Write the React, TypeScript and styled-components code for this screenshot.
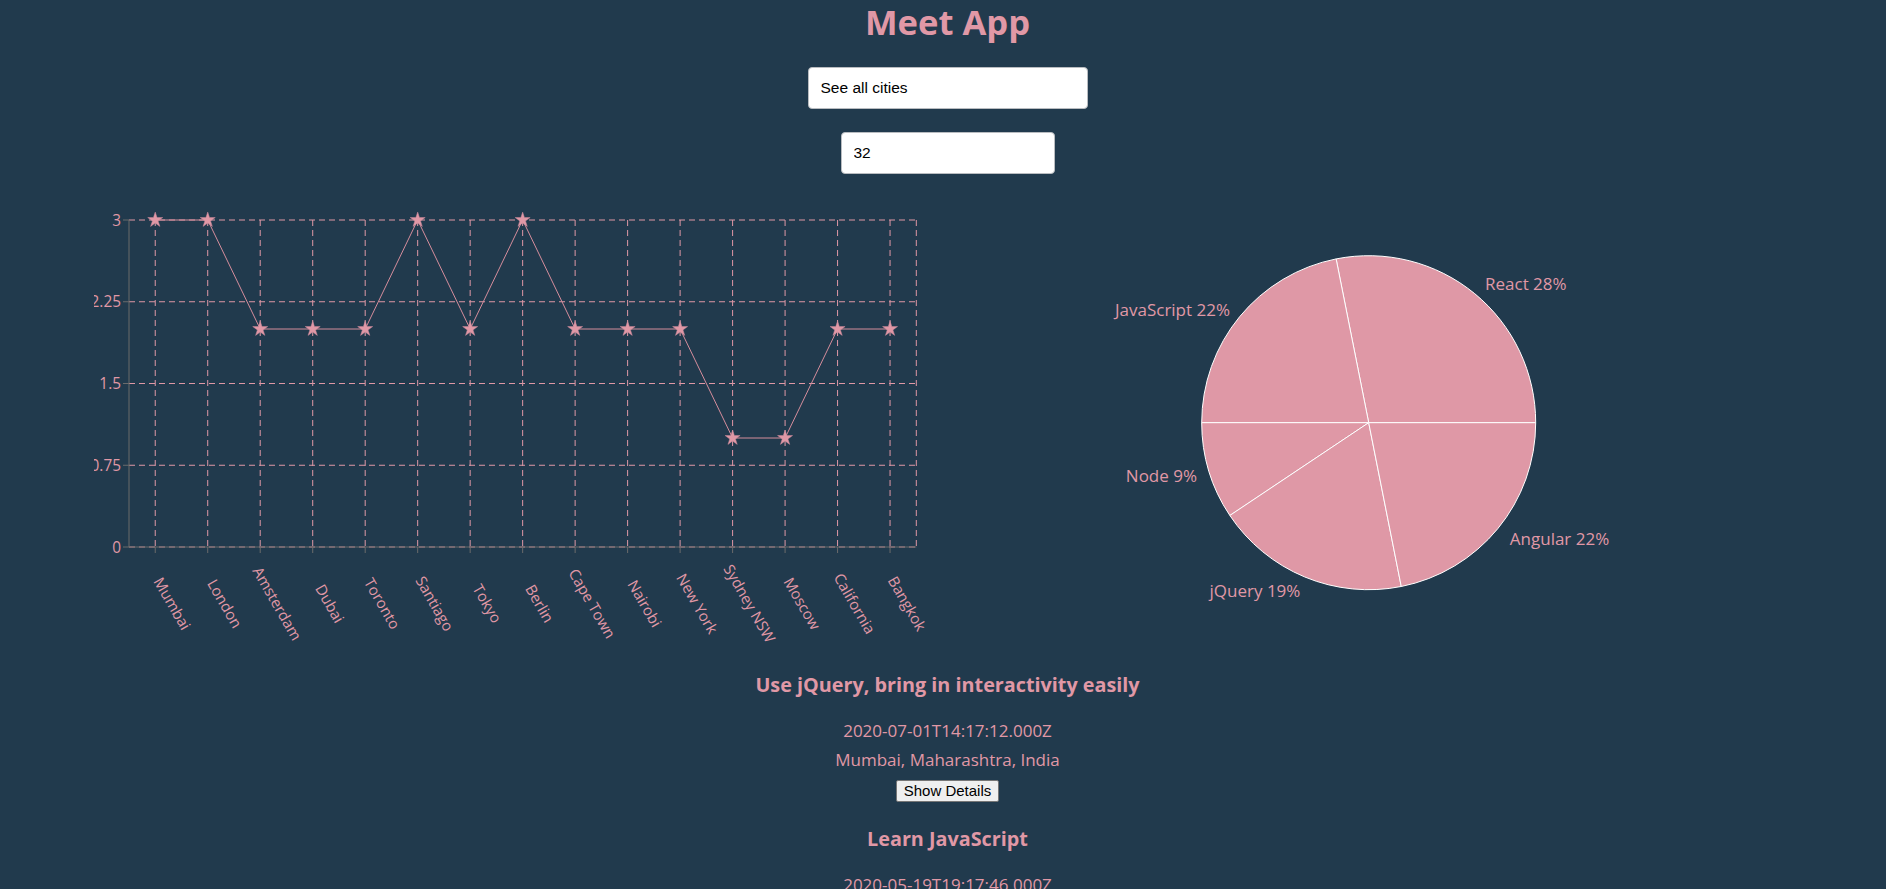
import React from 'react';
import styled, { createGlobalStyle } from 'styled-components';

const PINK = '#e098a6';
const BG = '#213a4d';
const AXIS = '#6b6b6b';

const GlobalStyle = createGlobalStyle`
  html, body { margin: 0; padding: 0; background: ${BG}; }
  body { font-family: "Open Sans", "Noto Sans", sans-serif; color: ${PINK}; }
`;

const Page = styled.div`
  display: flex;
  flex-direction: column;
  align-items: center;
  padding-left: 9px;
  min-height: 889px;
`;

const Title = styled.h1`
  margin: 0;
  font-size: 34.6px;
  line-height: 44px;
  font-weight: 700;
  color: ${PINK};
`;

const TextBox = styled.input<{ $w: number; $mt: number }>`
  box-sizing: border-box;
  width: ${(p) => p.$w}px;
  height: 42px;
  margin-top: ${(p) => p.$mt}px;
  padding: 0 12px;
  border: 1px solid #b9bcc0;
  border-radius: 4px;
  background: #fff;
  color: #000;
  font-family: "Liberation Sans", Arial, sans-serif;
  font-size: 15.5px;
  outline: none;
`;

const ChartsRow = styled.div`
  align-self: stretch;
  display: flex;
  align-items: flex-start;
  gap: 158px;
  padding-left: 85px;
  margin-top: 26px;
`;

const ChartSvg = styled.svg`
  display: block;
  overflow: hidden;
  flex: none;
`;

const EventList = styled.ul`
  list-style: none;
  margin: 12px 0 0;
  padding: 0;
  display: flex;
  flex-direction: column;
  align-items: center;
`;

const EventItem = styled.li`
  display: flex;
  flex-direction: column;
  align-items: center;
  margin-bottom: 24.3px;
`;

const EventTitle = styled.h3`
  margin: 0;
  font-size: 19.8px;
  line-height: 26px;
  font-weight: 700;
  color: ${PINK};
`;

const EventLine = styled.p<{ $mt: number }>`
  margin: ${(p) => p.$mt}px 0 0;
  font-size: 17px;
  line-height: 22px;
  color: ${PINK};
`;

const DetailsButton = styled.button`
  box-sizing: border-box;
  margin-top: 8.7px;
  height: 22px;
  padding: 0 7px;
  border: 1px solid #767676;
  border-radius: 2px;
  background: #efefef;
  color: #000;
  font-family: "Liberation Sans", Arial, sans-serif;
  font-size: 15px;
  line-height: 18px;
`;

/* ---------- line / scatter chart ---------- */

const cities: [string, number][] = [
  ['Mumbai', 3], ['London', 3], ['Amsterdam', 2], ['Dubai', 2], ['Toronto', 2],
  ['Santiago', 3], ['Tokyo', 2], ['Berlin', 3], ['Cape Town', 2], ['Nairobi', 2],
  ['New York', 2], ['Sydney NSW', 1], ['Moscow', 1], ['California', 2], ['Bangkok', 2],
];

const X0 = 35;
const X1 = 822.3;
const Y0 = 20;
const Y1 = 347;
const band = (X1 - X0) / cities.length;
const px = (i: number) => X0 + band * (i + 0.5);
const py = (v: number) => Y1 - (v / 3) * (Y1 - Y0);

function starPath(cx: number, cy: number, size = 70) {
  const ka = 0.8908130915292852;
  const kr = Math.sin(Math.PI / 10) / Math.sin((7 * Math.PI) / 10);
  const kx = Math.sin((2 * Math.PI) / 10) * kr;
  const ky = -Math.cos((2 * Math.PI) / 10) * kr;
  const r = Math.sqrt(size * ka);
  const x = kx * r;
  const y = ky * r;
  const pts: [number, number][] = [[0, -r], [x, y]];
  for (let i = 1; i < 5; i++) {
    const a = (2 * Math.PI * i) / 5;
    const c = Math.cos(a);
    const s = Math.sin(a);
    pts.push([s * r, -c * r]);
    pts.push([c * x - s * y, s * x + c * y]);
  }
  return 'M' + pts.map(([a, b]) => `${(cx + a).toFixed(2)},${(cy + b).toFixed(2)}`).join('L') + 'Z';
}

const CityChart = () => {
  const yTicks = [0, 0.75, 1.5, 2.25, 3];
  const linePts = cities.map(([, v], i) => `${px(i)},${py(v)}`).join(' ');
  return (
    <ChartSvg width={836} height={460} viewBox="0 0 836 460">
      <g stroke={PINK} strokeDasharray="6 4" fill="none" strokeWidth={1}>
        {yTicks.map((t) => (
          <line key={t} x1={X0} x2={X1} y1={py(t)} y2={py(t)} />
        ))}
        {cities.map((c, i) => (
          <line key={c[0]} x1={px(i)} x2={px(i)} y1={Y0} y2={Y1} />
        ))}
        <line x1={X1} x2={X1} y1={Y0} y2={Y1} />
      </g>
      <g stroke={AXIS} strokeWidth={1}>
        <line x1={X0} x2={X0} y1={Y0} y2={Y1} />
        <line x1={X0} x2={X1} y1={Y1} y2={Y1} />
        {yTicks.map((t) => (
          <line key={t} x1={X0 - 6} x2={X0} y1={py(t)} y2={py(t)} />
        ))}
        {cities.map((c, i) => (
          <line key={c[0]} x1={px(i)} x2={px(i)} y1={Y1} y2={Y1 + 6} />
        ))}
      </g>
      <g fill={PINK} fontSize={15.4} fontFamily='"Open Sans", sans-serif'>
        {yTicks.map((t) => (
          <text key={t} x={X0 - 8} y={py(t)} textAnchor="end" dominantBaseline="central">
            {t}
          </text>
        ))}
      </g>
      <g fill={PINK} fontSize={15} fontFamily='"Open Sans", sans-serif'>
        {cities.map((c, i) => {
          const cx = px(i) + 17.5;
          const cy = 403.3;
          return (
            <text
              key={c[0]}
              x={cx}
              y={cy}
              textAnchor="middle"
              dominantBaseline="central"
              transform={`rotate(60, ${cx}, ${cy})`}
            >
              {c[0]}
            </text>
          );
        })}
      </g>
      <polyline points={linePts} fill="none" stroke="#d58d9c" strokeWidth={1} />
      <g fill={PINK} stroke="#c9899a" strokeWidth={0.5}>
        {cities.map(([n, v], i) => (
          <path key={n} d={starPath(px(i), py(v))} />
        ))}
      </g>
    </ChartSvg>
  );
};

/* ---------- pie chart ---------- */

const genres = [
  { name: 'React', value: 9, label: 'React 28%', x: 397, y: 83.3, anchor: 'start' },
  { name: 'JavaScript', value: 7, label: 'JavaScript 22%', x: 142, y: 109, anchor: 'end' },
  { name: 'Node', value: 3, label: 'Node 9%', x: 109, y: 275.7, anchor: 'end' },
  { name: 'jQuery', value: 6, label: 'jQuery 19%', x: 212.4, y: 390.7, anchor: 'end' },
  { name: 'Angular', value: 7, label: 'Angular 22%', x: 421.8, y: 338.3, anchor: 'start' },
];

const PCX = 280.7;
const PCY = 222.7;
const PR = 167;

const GenreChart = () => {
  const total = genres.reduce((s, g) => s + g.value, 0);
  let start = 0;
  const slices = genres.map((g) => {
    const a0 = start;
    const a1 = start + (g.value / total) * 360;
    start = a1;
    const r0 = (a0 * Math.PI) / 180;
    const r1 = (a1 * Math.PI) / 180;
    const p0 = [PCX + PR * Math.cos(r0), PCY - PR * Math.sin(r0)];
    const p1 = [PCX + PR * Math.cos(r1), PCY - PR * Math.sin(r1)];
    const large = a1 - a0 > 180 ? 1 : 0;
    const d = `M${PCX},${PCY} L${p0[0]},${p0[1]} A${PR},${PR} 0 ${large} 0 ${p1[0]},${p1[1]} Z`;
    return { ...g, d };
  });
  return (
    <ChartSvg width={560} height={460} viewBox="0 0 560 460">
      {slices.map((s) => (
        <path key={s.name} d={s.d} fill="#df98a6" stroke="#ffffff" strokeWidth={1} />
      ))}
      <g fill={PINK} fontSize={17} fontFamily='"Open Sans", sans-serif'>
        {slices.map((s) => (
          <text key={s.name} x={s.x} y={s.y} textAnchor={s.anchor as 'start' | 'end'} dominantBaseline="central">
            {s.label}
          </text>
        ))}
      </g>
    </ChartSvg>
  );
};

const events = [
  { title: 'Use jQuery, bring in interactivity easily', date: '2020-07-01T14:17:12.000Z', place: 'Mumbai, Maharashtra, India' },
  { title: 'Learn JavaScript', date: '2020-05-19T19:17:46.000Z', place: 'London, UK' },
  { title: 'React is Fun', date: '2020-05-21T16:00:00.000Z', place: 'Berlin, Germany' },
];

export default function App() {
  return (
    <>
      <GlobalStyle />
      <Page>
        <Title>Meet App</Title>
        <TextBox $w={280} $mt={23} defaultValue="See all cities" readOnly />
        <TextBox $w={214} $mt={23} defaultValue="32" readOnly />
        <ChartsRow>
          <CityChart />
          <GenreChart />
        </ChartsRow>
        <EventList>
          {events.map((e) => (
            <EventItem key={e.title}>
              <EventTitle>{e.title}</EventTitle>
              <EventLine $mt={21.7}>{e.date}</EventLine>
              <EventLine $mt={7.3}>{e.place}</EventLine>
              <DetailsButton>Show Details</DetailsButton>
            </EventItem>
          ))}
        </EventList>
      </Page>
    </>
  );
}
